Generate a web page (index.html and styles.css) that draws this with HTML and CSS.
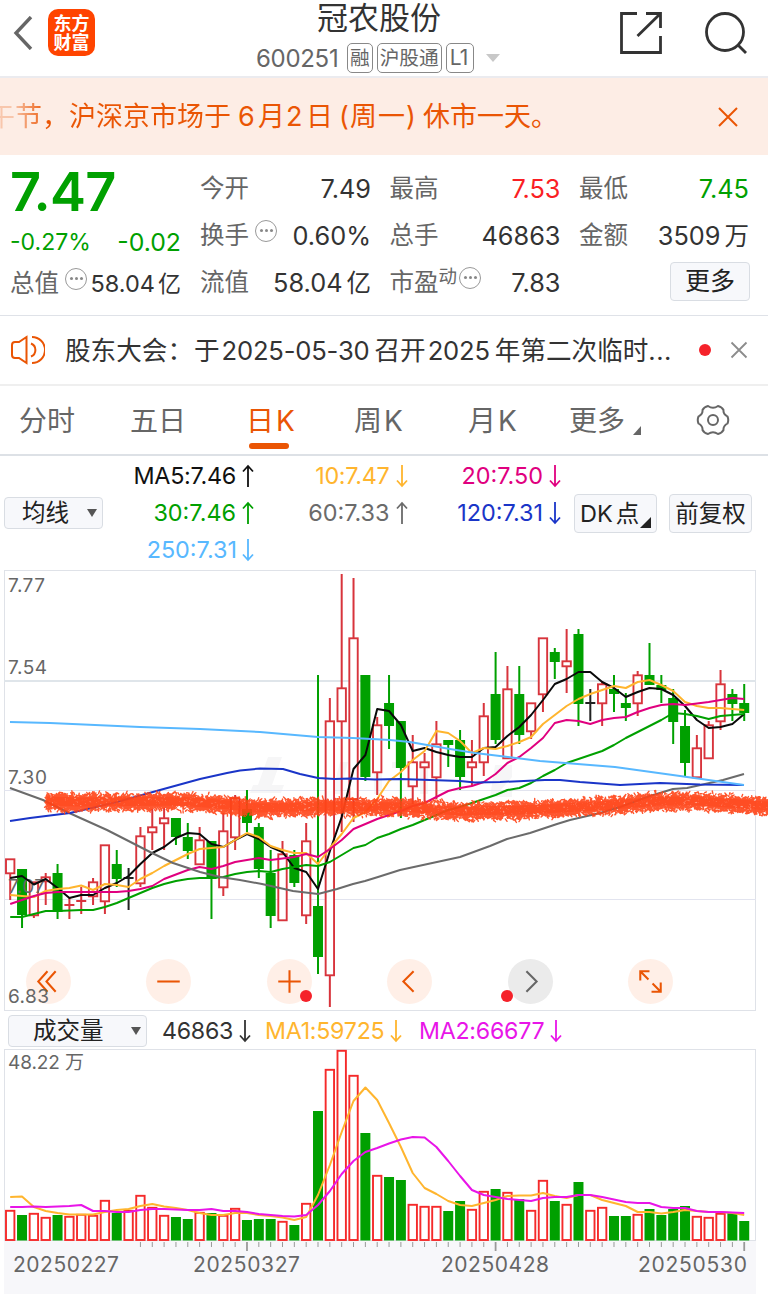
FILE: index.html
```html
<!DOCTYPE html>
<html lang="zh-CN">
<head>
<meta charset="utf-8">
<title>冠农股份 600251</title>
<link rel="stylesheet" href="styles.css">
</head>
<body>
<header class="top">
  <svg class="back" width="20" height="34" viewBox="0 0 20 34"><path d="M18 1 3 17l15 16" fill="none" stroke="#666" stroke-width="3.400"/></svg>
  <div class="logo"><span>东方</span><span>财富</span></div>
  <div class="stock">
    <h1>冠农股份</h1>
    <div class="code-row"><span class="code">600251</span><span class="tag">融</span><span class="tag">沪股通</span><span class="tag l1">L1</span><i class="caret"></i></div>
  </div>
  <svg class="share" width="44" height="44" viewBox="0 0 44 44" fill="none" stroke="#333" stroke-width="2.8"><path d="M18 2.500H2.500V41.500H41.500V25M27 2.500H41.500V17M41 3 18.500 25"/></svg>
  <svg class="search" width="44" height="44" viewBox="0 0 44 44" fill="none" stroke="#333" stroke-width="2.800"><circle cx="21" cy="21" r="18.500"/><path d="M33.500 33.500 42 42"/></svg>
</header>

<section class="notice">
  <p><span class="m1">午节，沪深京市场于</span><span class="m2">6</span><span class="m3">月</span><span class="m2">2</span><span class="m4">日</span><span class="m5">(</span><span class="m6">周一</span><span class="m7">)</span><span>休市一天。</span></p>
  <svg width="20" height="20" viewBox="0 0 20 20"><path d="M1 1 19 19M19 1 1 19" stroke="#ea5504" stroke-width="2"/></svg>
</section>

<section class="quote">
  <div class="main">
    <div class="price">7.47</div>
    <div class="chg"><span>-0.27%</span><b>-0.02</b></div>
    <div class="cell cap"><span>总值</span><i class="dots"></i><b>58.04<em>亿</em></b></div>
  </div>
  <div class="stats">
    <div class="cell"><span>今开</span><b>7.49</b></div>
    <div class="cell"><span>最高</span><b class="up">7.53</b></div>
    <div class="cell"><span>最低</span><b class="down">7.45</b></div>
    <div class="cell"><span>换手</span><i class="dots"></i><b>0.60%</b></div>
    <div class="cell"><span>总手</span><b>46863</b></div>
    <div class="cell"><span>金额</span><b>3509<em>万</em></b></div>
    <div class="cell"><span>流值</span><b>58.04<em>亿</em></b></div>
    <div class="cell pe"><span>市盈</span><sup>动</sup><i class="dots"></i><b>7.83</b></div>
    <div class="cell"><button class="more">更多</button></div>
  </div>
</section>

<section class="news">
  <svg width="34" height="30" viewBox="0 0 34 30" fill="none" stroke="#ea5504" stroke-width="2"><path d="M15.500 2 8 7H4Q1 7 1 10V20Q1 23 4 23H8L15.500 28Z"/><path d="M20 8.500A7 7 0 0 1 20 21.500"/><path d="M21 2A13 13 0 0 1 21 28"/></svg>
  <p><span class="n1">股东大会：</span><span>于</span><span class="lat">2025-05-30</span><span>召开</span><span class="lat">2025</span><span>年第二次临时</span><span class="ell">...</span></p>
  <i class="dot"></i>
  <svg class="x" width="18" height="18" viewBox="0 0 18 18"><path d="M1.500 1.500 16.500 16.500M16.500 1.500 1.500 16.500" stroke="#8c8c8c" stroke-width="1.800"/></svg>
</section>

<nav class="tabs">
  <a>分时</a><a>五日</a><a class="on">日<span>K</span></a><a>周<span>K</span></a><a>月<span>K</span></a><a>更多<i class="corner"></i></a>
  <svg width="34" height="34" viewBox="-17 -17 34 34" fill="none" stroke="#666" stroke-width="2"><path d="M-5-14Q0-10.500 5-14Q9-13 10.500-10Q10-6 14.500-3.500Q16 0 14.500 3.500Q10 6 10.500 10Q9 13 5 14Q0 10.500-5 14Q-9 13-10.500 10Q-10 6-14.500 3.500Q-16 0-14.500-3.500Q-10-6-10.500-10Q-9-13-5-14Z"/><circle r="5"/></svg>
</nav>

<svg width="0" height="0" class="defs"><symbol id="dn" viewBox="0 0 12 24"><path d="M6 1V22M1 16.500 6 22 11 16.500" fill="none" stroke="currentColor" stroke-width="1.800"/></symbol><symbol id="up" viewBox="0 0 12 24"><path d="M6 23V2M1 7.500 6 2 11 7.500" fill="none" stroke="currentColor" stroke-width="1.800"/></symbol></svg>

<section class="ma">
  <button class="select">均线<i></i></button>
  <div class="ma-grid">
    <span class="c5">MA5:7.46<svg><use href="#up"/></svg></span>
    <span class="c10">10:7.47<svg><use href="#dn"/></svg></span>
    <span class="c20">20:7.50<svg><use href="#dn"/></svg></span>
    <span class="c30">30:7.46<svg><use href="#up"/></svg></span>
    <span class="c60">60:7.33<svg><use href="#up"/></svg></span>
    <span class="c120">120:7.31<svg><use href="#dn"/></svg></span>
    <span class="c250">250:7.31<svg><use href="#dn"/></svg></span>
  </div>
  <button class="opt dk">DK<span>点</span><i class="corner"></i></button>
  <button class="opt">前复权</button>
</section>

<section class="kline">
  <svg id="kline" width="768" height="441" viewBox="0 570 768 441"></svg>
  <div class="controls">
    <span class="ctl"><svg viewBox="-22 -22 44 44"><path d="M-1-10-10 0-1 10M7-10-2 0 7 10"/></svg></span>
    <span class="ctl"><svg viewBox="-22 -22 44 44"><path d="M-11 0H11"/></svg></span>
    <span class="ctl"><svg viewBox="-22 -22 44 44"><path d="M-11 0H11M0-11V11"/></svg><i class="dot b1"></i></span>
    <span class="ctl"><svg viewBox="-22 -22 44 44"><path d="M4-10-6 0 4 10"/></svg></span>
    <span class="ctl gray"><svg viewBox="-22 -22 44 44"><path d="M-4-10 6 0-4 10"/></svg><i class="dot b2"></i></span>
    <span class="ctl"><svg viewBox="-22 -22 44 44"><path d="M-1-10H-10V-1M-10-10-2-2M1 10H10V1M10 10 2 2"/></svg></span>
  </div>
  <span class="low">6.83</span>
</section>

<section class="vol-head">
  <button class="select wide">成交量<i></i></button>
  <span class="v0">46863<svg><use href="#dn"/></svg></span>
  <span class="v1">MA1:59725<svg><use href="#dn"/></svg></span>
  <span class="v2">MA2:66677<svg><use href="#dn"/></svg></span>
</section>
<svg id="volume" class="volume" width="768" height="245" viewBox="0 1049 768 245"></svg>
<script src="chart.js"></script>
</body>
</html>
```
FILE: styles.css
```css
* { box-sizing: border-box; }
body { margin: 0; width: 768px; height: 1294px; overflow: hidden; background: #fff; color: #333; font-family: Inter, "Noto Sans CJK SC", sans-serif; }
h1, p { margin: 0; font-weight: 400; }
i, em { font-style: normal; }
b { font-weight: 400; }
svg { display: block; flex: none; }
button { font-family: inherit; color: #222; background: #f7f8fb; border: 1px solid #d9dde3; border-radius: 4px; padding: 0; }

.top { height: 78px; border-bottom: 2px solid #ebebef; display: flex; align-items: flex-start; }
.back { margin: 16px 0 0 13px; }
.logo { margin: 9px 0 0 15px; width: 47px; height: 47px; border-radius: 10px; background: #ff4400; color: #fff; font-weight: 700; font-size: 18px; line-height: 19px; display: flex; flex-direction: column; align-items: center; padding-top: 5px; }
.stock { margin-left: 161px; width: 331px; }
.stock h1 { padding-left: 61px; font-size: 31px; line-height: 35px; white-space: nowrap; }
.code-row { display: flex; align-items: center; height: 30px; margin-top: 8px; }
.code { font-size: 24px; width: 91px; letter-spacing: -0.300px; color: #666; }
.tag { height: 30px; border: 1.500px solid #888; border-radius: 5px; padding: 0 2px; margin-right: 4px; font-size: 19.700px; line-height: 28px; color: #666; white-space: nowrap; }
.tag.l1 { width: 28px; padding: 0 3px; letter-spacing: -1px; font-size: 21px; }
.caret { border: 7px solid transparent; border-top: 8px solid #c8c8c8; border-bottom: 0; margin-left: 8px; }
.share { margin: 11px 0 0 32px; }
.search { margin: 11px 0 0 41px; }

.notice { height: 77px; background: #fdede5; display: flex; align-items: center; justify-content: space-between; padding-right: 30px; color: #ea5504; }
.notice p { font-size: 27px; line-height: 40px; white-space: nowrap; margin: 1px 0 0 -12px; display: flex; }
.m1 { background: linear-gradient(90deg, rgba(234,85,4,.25) 10%, #ea5504 60px); -webkit-background-clip: text; background-clip: text; color: transparent; margin-right: 7px; }
.m2 { width: 20px; }
.m3 { width: 28px; }
.m4 { width: 33px; }
.m5 { width: 11px; }
.m6 { letter-spacing: 1px; }
.m7 { width: 17px; }

.quote { height: 161px; border-bottom: 1px solid #dfe2e8; display: flex; padding: 10px 18px 0 10px; }
.main { width: 171px; margin-right: 19px; }
.price { color: #00a000; font-size: 54px; font-weight: 600; letter-spacing: -0.800px; line-height: 54px; height: 53px; }
.chg { display: flex; justify-content: space-between; color: #00a000; font-size: 23px; line-height: 48px; height: 42px; }
.chg b { font-size: 24.800px; }
.stats { flex: 1; display: grid; grid-template-columns: 171px 171px 170px; column-gap: 18.500px; grid-auto-rows: 47.200px; justify-content: start; }
.cell { display: flex; align-items: center; font-size: 25.300px; line-height: 47px; height: 47px; white-space: nowrap; }
.cell span { color: #666; font-size: 24.500px; }
.cell b { margin-left: auto; }
.cell em { font-size: 24.500px; margin-left: 4px; }
.cell.cap b { font-size: 23.500px; }
.cell.cap em { font-size: 23px; margin-left: 3px; }
.cell sup { font-size: 18.500px; line-height: 20px; color: #666; margin-top: -14px; }
.up { color: #fa1e24; }
.down { color: #00a000; }
.dots { width: 22px; height: 22px; border: 1.800px solid #999; border-radius: 50%; margin: -10px 0 0 6px; display: flex; align-items: center; justify-content: center; flex: none; }
.pe .dots { margin-left: 2px; }
.dots::before { content: ""; width: 3px; height: 3px; border-radius: 50%; background: #888; box-shadow: -5px 0 #888, 5px 0 #888; }
.more { margin-left: auto; margin-right: -1px; margin-top: -2px; width: 80px; height: 39px; font-size: 25px; line-height: 35px; }

.news { height: 70px; border-bottom: 2px solid #efefef; display: flex; align-items: center; padding-left: 11px; }
.news p { width: 610px; margin: -4px 0 0 20px; font-size: 25.600px; display: flex; align-items: baseline; white-space: nowrap; }
.n1 { width: 129px; }
.lat { margin: 0 5px 0 2px; letter-spacing: -0.200px; }
.ell { letter-spacing: 0.500px; }
.dot { width: 12px; height: 12px; border-radius: 50%; background: #f5222a; margin-left: 24px; }
.news .x { margin-left: 19px; }

.tabs { height: 70px; border-bottom: 2px solid #dde1e6; display: grid; grid-template-columns: 111px 116px 108px 114px 101px 127px auto; padding-left: 19px; align-items: center; font-size: 28px; color: #666; }
.tabs a { display: flex; align-items: center; position: relative; height: 68px; line-height: 40px; padding-top: 2px; }
.tabs a span { margin-left: 2px; font-size: 28px; }
.tabs .on { color: #ea5504; }
.tabs .on::after { content: ""; position: absolute; left: 3px; bottom: 5px; width: 40px; height: 6px; border-radius: 3px; background: #ea5504; }
.corner { width: 0; height: 0; border-left: 8px solid transparent; border-bottom: 9px solid currentColor; }
.tabs .corner { margin: 19px 0 0 8px; }

.ma { height: 114px; display: flex; align-items: center; padding-left: 4px; }
.select { width: 99px; height: 32px; font-size: 23.500px; line-height: 28px; display: flex; align-items: center; justify-content: space-between; padding: 0 5px 0 17px; }
.select i { border: 5px solid transparent; border-top: 8px solid #555; border-bottom: 0; }
.ma-grid { display: grid; grid-template-columns: 151px 153.500px 153.500px; grid-auto-rows: 37px; font-size: 23.400px; letter-spacing: 0; margin-top: -1px; }
.ma-grid span { display: flex; align-items: center; justify-content: flex-end; }
.ma-grid .c5 { letter-spacing: -0.300px; }
.ma-grid .c10 { letter-spacing: -0.300px; }
.ma-grid svg, .vol-head svg { width: 12px; height: 24px; margin-left: 6px; }
.c5 { color: #111; } .c10 { color: #ffb52e; } .c20 { color: #e0007f; } .c30 { color: #00a000; } .c60 { color: #6b6b6b; } .c120 { color: #1a35c8; } .c250 { color: #58b8ff; }
.ma-grid .c250 svg { margin-left: 5px; }
.opt { width: 83px; height: 39px; margin-left: 12px; font-size: 23.500px; line-height: 35px; white-space: nowrap; }
.dk { display: flex; align-items: center; padding-left: 5px; position: relative; margin-left: 13px; }
.dk span { margin-left: 3px; }
.dk .corner { position: absolute; right: 5px; bottom: 4px; border-left-width: 11px; border-bottom-width: 11px; }

.kline { height: 441px; position: relative; }
.controls { position: absolute; left: 26px; top: 389px; display: flex; gap: 75.400px; }
.ctl { width: 45px; height: 45px; border-radius: 50%; background: rgba(255,235,225,.8); position: relative; }
.ctl svg { width: 45px; height: 45px; fill: none; stroke: #ea5504; stroke-width: 2; }
.ctl.gray { background: #ebebeb; }
.ctl.gray svg { stroke: #666; }
.ctl .dot { position: absolute; margin: 0; top: 31px; }
.b1 { left: 33px; }
.b2 { left: -7px; }
.low { position: absolute; left: 8px; bottom: 2px; font-size: 19px; line-height: 24px; color: #666; letter-spacing: 0.400px; }

.vol-head { height: 38px; display: flex; align-items: center; padding: 2px 0 0 8px; font-size: 23.200px; }
.vol-head .wide { width: 139px; padding-left: 24px; margin-right: 15px; }
.vol-head span { display: flex; align-items: center; letter-spacing: -0.250px; }
.v0 { width: 103px; } .v1 { width: 154px; color: #ffb52e; } .v2 { color: #e815e8; }
.volume text, .kline text { fill: #666; font-family: Inter, "Noto Sans CJK SC", sans-serif; }
```
FILE: chart.js
```js
const STEP = 11.839, X0 = 10.2;
const RED = '#d8343c', GREEN = '#00a000', VRED = '#f52a2a';
// type, high, body top, body bottom, low
const candles = `r859 859 873 900|g869 869 914 928|r882 882 915 918|r873 877 881 905|g864 873 911 919|r897 905 905 919|r887 901 901 914|r878 882 896 905|r845 845 901 914|g850 864 878 887|k868 878 878 910|r827 836 883 887|r809 827 832 850|r808 818 823 850|g818 818 836 845|g823 837 850 859|r827 840 864 864|g841 841 878 919|r813 831 887 896|r795 798 837 850|g790 809 822 832|g823 827 868 878|g850 873 915 928|r841 854 920 920|g850 855 882 887|r823 841 915 924|g675 906 956 974|r698 721 975 1007|r574 688 721 832|r578 638 799 822|g675 675 776 781|r717 725 772 795|g675 703 725 749|g721 721 767 818|r735 762 786 804|r753 762 767 802|r721 744 777 799|g740 740 744 767|g730 740 776 790|r740 762 767 786|r703 716 762 776|g652 694 739 744|r666 689 758 758|g666 694 734 744|r703 703 731 739|r638 638 694 712|g648 652 661 679|r629 661 666 693|g629 634 703 726|k689 703 703 721|r682 684 703 726|g675 689 693 712|g693 703 707 721|r671 675 703 716|g643 675 684 684|g675 685 689 703|g689 698 721 744|g710 726 762 777|r735 748 777 777|r721 725 758 758|r670 684 721 730|g689 694 703 721|g684 703 712 721`
  .split('|').map(s => [s[0], ...s.slice(1).split(' ').map(Number)]);
const ma5 = [878,876,884.5,879,888,898,895,895,888,883,876,864,853,847,838,833,834,844,847,840,834,839,847,852,868,872,889,851,817,769,755,709,711,725,751,748,752,755,757,757,748,747,736,727,715,700,684,679,672,672,682,688,697,692,688,689,695,706,720,728,727,724,714];
const ma10 = [895,896,897,891,889,888,885.5,890,884,885,887,879,873,866,860,854,849,848,847,840,833,837,846,850,853,853,864,848,834,818,812,799,781,772,760,751,731,733,741,753,748,749,746,742,737,724,715,706,699,694,690,686,688,682,680,685,691,702,706,708,708,709,710];
const ma20 = [904,900,896,893,892,892,892,892,892,892,891,889,886,879,874.5,870,867,869,866,862,860,858,860,858.5,857,854,857,849,840,829,824,819,815,811,806,803,797,791,788,786,782,774,763,757,748,738,723,720,721,724,720,718,717,712,708,705,704,705,703.5,702,700,698,699];
const ma30 = [917,917,914,911,911,910.5,910,910,907,903,898,893,888,884,881,879,878,878,877,874,872,871,872,869,867,865,866,862,855,848,845,838,834,829,825,820,815,810,807,803,799,795,790,788,783,776,770,763,759,755,751,745,738,732,726,720,713,714,716,719,716,715,714];
const ma60 = '10,788 43,800 67,812 107,830 152,853 173,863 200,872 220,877 240,880 262,884 293,891 318,894 337,889 353,884 365,881 378,877 400,870 460,857 490,846 507,839 530,833 557,824 570,820 600,813 620,807 650,796 673,789 687,788 723,780 744,774';
const ma120 = '10,821 30,818 70,813 117,802 160,790 200,779 227,773 240,770.5 260,768.500 283,769 300,774 318,778 335,779 350,778.500 375,779.500 400,779 460,781 475,782.500 500,782 545,780 560,780 580,782 620,785 660,783 700,784.500 744,785';
const ma250 = '10,722 50,723 140,727 200,729 260,732 318,737 353,738 390,740 410,742 450,749 475,753 500,756 540,761 565,763 615,767 680,776 744,785';
const vols = [1210,1215,1213,1217,1215,1216,1214,1215,1200,1213,1210,1195,1207,1215,1217,1219,1212,1213,1215,1208,1220,1219,1219,1221,1225,1203,1111,1069,1050,1075,1133,1175,1177,1180,1204,1206,1206,1211,1201,1209,1191,1189,1192,1199,1210,1180,1201,1204,1182,1210,1207,1216,1216,1214,1209,1215,1209,1206,1216,1217,1213,1213,1221];
const vma1 = [1197,1196.5,1207,1211,1213,1214.5,1214.5,1214.5,1212,1210,1209,1206,1204,1206.5,1208,1210,1213,1215,1215,1213,1213,1215,1216,1217.5,1220,1217,1195,1165,1132,1101,1087.5,1100,1123,1147,1173,1188,1194,1201,1205,1206,1203,1200,1196,1195.5,1195.5,1193,1196,1198,1195,1195,1200,1203,1206,1212,1212,1213.5,1212,1210,1211,1212,1212,1213,1215];
const vma2 = [1207,1207,1206.5,1207,1206.5,1206,1205,1211,1211,1212,1212,1210,1209,1209,1209.5,1210,1210,1209,1211,1211,1212,1214,1215,1216,1216.5,1215,1205,1191,1174,1161,1152,1148,1143.5,1139.5,1137,1137.5,1147,1161,1176,1190,1195,1197,1199,1200,1201,1198,1197,1197,1195,1195,1197,1199.5,1202,1203,1203,1207,1208,1208,1211,1212,1212,1212.5,1213];

const x = i => X0 + i * STEP;
const poly = (pts, color, w = 2) => `<polyline points="${pts}" fill="none" stroke="${color}" stroke-width="${w}" stroke-linejoin="round"/>`;
const series = (arr, color) => poly(arr.map((v, i) => `${x(i).toFixed(1)},${v}`).join(' '), color);
const label = (tx, ty, len, str, size = 19) => `<text x="${tx}" y="${ty}" textLength="${len}" font-size="${size}">${str}</text>`;
const frame = (y, h) => `<rect x="4.500" y="${y}" width="751" height="${h}" fill="none" stroke="#dfe2e8"/>`;

let k = frame(570.5, 440);
k += '<g fill="#f6f6f7"><path d="M268 757h14l-10 28h-14zM253 785h31l-3 8h-31zM340 762h8l-8 32h-8zM374 760h8v34h-8zM392 762h22v6h-22zM420 760h8v34h-8zM495 765h17v12l-12 14h12v6h-22z"/></g>';
k += '<path d="M4 681H756" stroke="#dfe5ea" stroke-width="2"/><path d="M4 790.500H756M4 899.500H756" stroke="#e2e4ef"/>';
candles.forEach(([t, h, a, b, l], i) => {
  const c = t === 'r' ? RED : t === 'g' ? GREEN : '#222', cx = x(i);
  k += `<path d="M${cx} ${h}V${a}M${cx} ${b}V${l}" stroke="${c}" stroke-width="2"/>`;
  if (a === b) k += `<path d="M${cx - 5} ${a}H${cx + 5}" stroke="${c}" stroke-width="2"/>`;
  else if (t === 'g') k += `<rect x="${cx - 5}" y="${a}" width="10" height="${b - a + 1}" fill="${c}"/>`;
  else k += `<rect x="${cx - 4.2}" y="${a + 0.3}" width="8.400" height="${b - a}" fill="#fff" stroke="${c}" stroke-width="1.900"/>`;
});
k += label(8, 592, 37, '7.77') + label(8, 674, 39, '7.54') + label(8, 784, 39, '7.30') + label(8, 893, 37, '7.07');
k += series(ma5, '#0a0a0a') + series(ma10, '#ffb52e') + series(ma20, '#e0007f') + series(ma30, GREEN);
k += poly(ma60, '#6b6b6b') + poly(ma120, '#1a35c8') + poly(ma250, '#58b8ff');

// hand-drawn marker: short strokes scattered round the support line
const marker = [[47,801],[80,802],[180,801],[230,805],[260,808],[330,806],[400,807],[460,811],[520,810],[600,806],[660,801],[700,801],[768,806]];
let seed = 7;
const rnd = () => (seed = seed * 16807 % 2147483647) / 2147483647;
const markerY = px => {
  let j = 1;
  while (j < marker.length - 1 && px > marker[j][0]) j++;
  const [xa, ya] = marker[j - 1], [xb, yb] = marker[j];
  return ya + (yb - ya) * (px - xa) / (xb - xa);
};
let d = '';
for (let n = 0; n < 8500; n++) {
  const px = 46 + rnd() * 724, off = (rnd() + rnd() * 0.4 - 0.7) * 14 + 0.5;
  d += `M${px.toFixed(1)} ${(markerY(px) + off).toFixed(1)}l${(rnd() * 5 - 2.5).toFixed(1)} ${(rnd() * 5 - 2.5).toFixed(1)}`;
}
k += `<polyline points="${marker.join(' ')}" fill="none" stroke="#ff4418" stroke-width="9" opacity=".5"/><path d="${d}" stroke="#ff4418" stroke-width="1.400" stroke-linecap="round" opacity=".9"/>`;
document.getElementById('kline').innerHTML = k;

let v = '<rect x="4" y="1240" width="752" height="54" fill="#f7f7fa"/>' + frame(1049.5, 191);
vols.forEach((top, i) => {
  const cx = x(i), t = candles[i][0];
  const up = t !== 'g';
  v += up ? `<rect x="${cx - 4.2}" y="${top + 0.8}" width="8.400" height="${1239.2 - top}" fill="#fff" stroke="${VRED}" stroke-width="1.900"/>`
    : `<rect x="${cx - 5}" y="${top}" width="10" height="${1240.5 - top}" fill="${GREEN}"/>`;
  if (i > 10) {
    const major = i === 20 || i === 41 || i === 62;
    v += `<path d="M${cx} 1242v${major ? 9 : 5}" stroke="#999" stroke-width="${major ? 1.8 : 1}"/>`;
  }
});
v += series(vma1, '#ffb52e') + series(vma2, '#e815e8');
v += label(8, 1069, 76, '48.22 万') + label(13, 1272, 106, '20250227', 21) + label(193, 1272, 107, '20250327', 21) + label(441, 1272, 108, '20250428', 21) + label(638, 1272, 109, '20250530', 21);
document.getElementById('volume').innerHTML = v;
```
